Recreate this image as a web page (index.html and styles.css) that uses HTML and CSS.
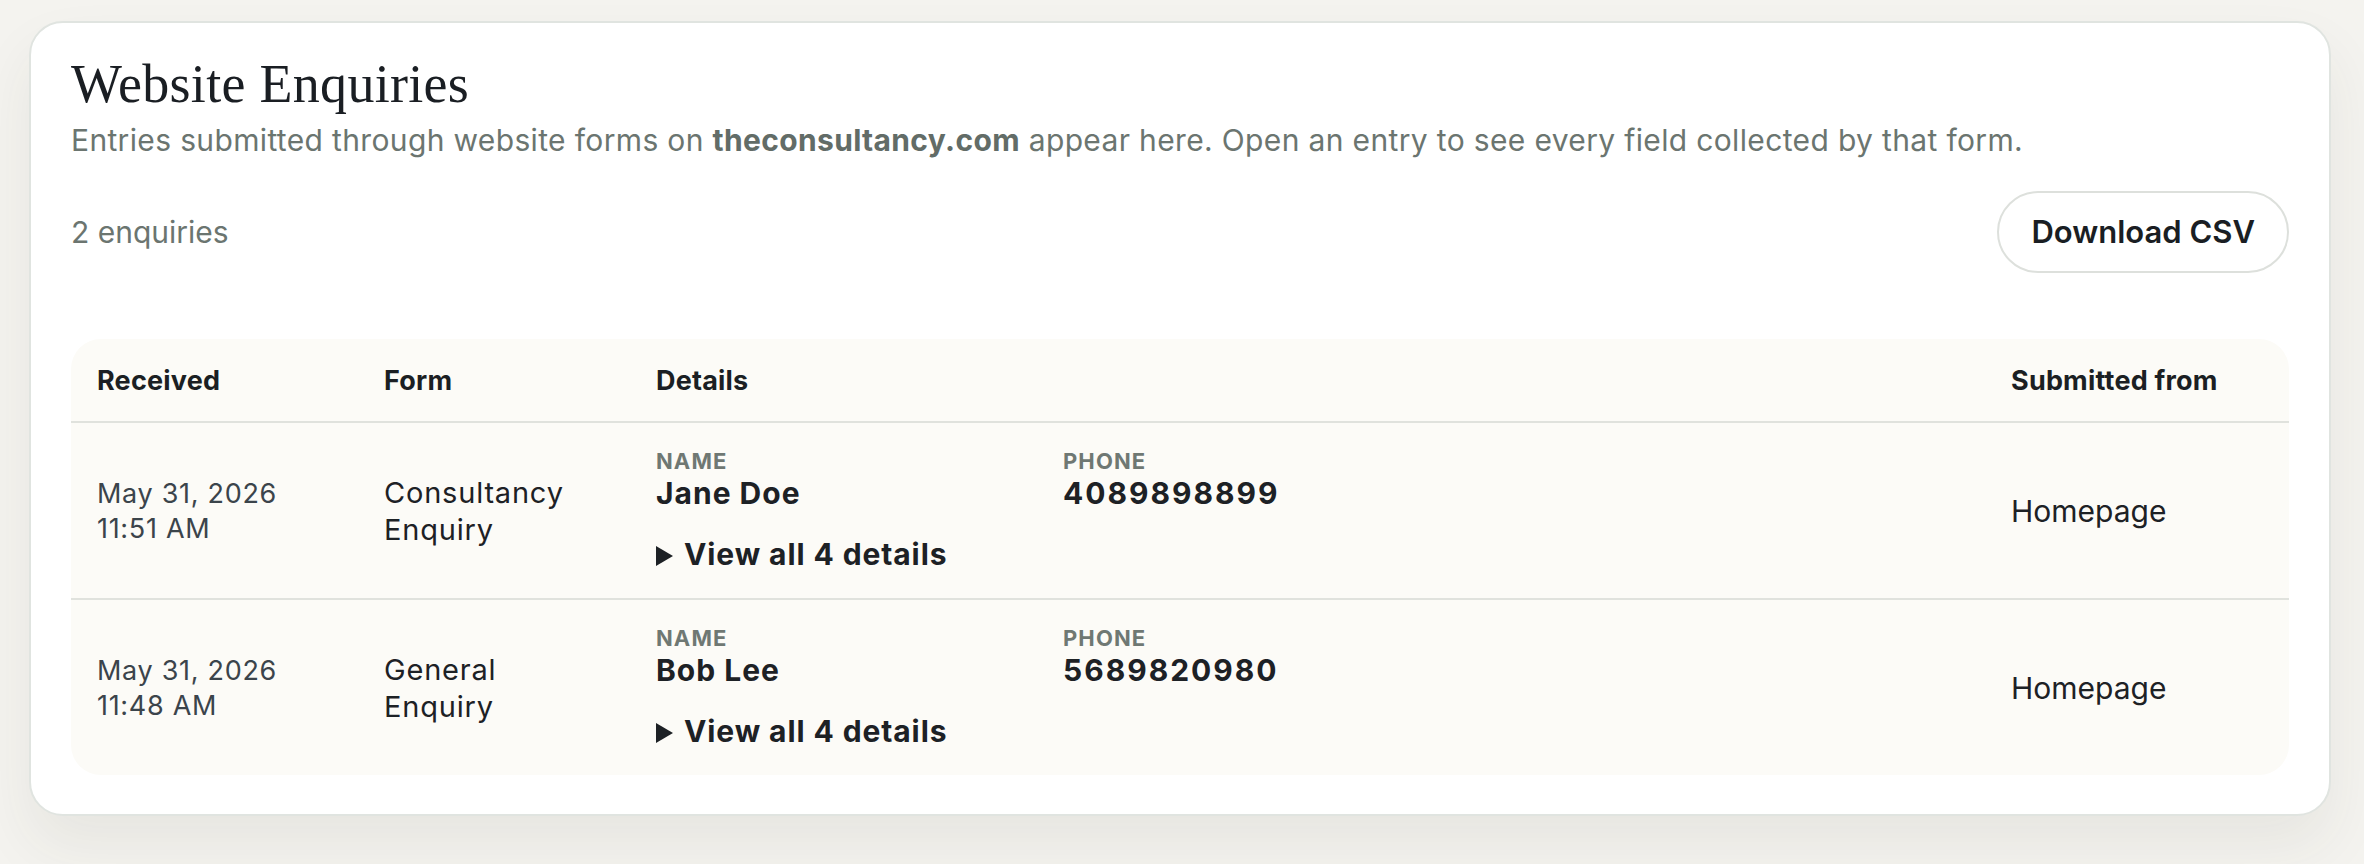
FILE: index.html
```html
<!DOCTYPE html>
<html lang="en">
<head>
    <meta charset="UTF-8">
    <meta name="viewport" content="width=device-width, initial-scale=1.0">
    <title>Website Enquiries</title>
    <link rel="stylesheet" href="styles.css">
</head>
<body>
    <div class="page">
        <section class="card">
            <h1 class="title">Website Enquiries</h1>
            <p class="intro">Entries submitted through website forms on <strong>theconsultancy.com</strong> appear here. Open an entry to see every field collected by that form.</p>

            <div class="toolbar">
                <span class="count">2 enquiries</span>
                <button class="csv-button" type="button">Download CSV</button>
            </div>

            <div class="table-wrap">
                <table class="enquiries">
                    <colgroup>
                        <col class="col-received">
                        <col class="col-form">
                        <col>
                        <col class="col-source">
                    </colgroup>
                    <thead>
                        <tr>
                            <th>Received</th>
                            <th>Form</th>
                            <th>Details</th>
                            <th>Submitted from</th>
                        </tr>
                    </thead>
                    <tbody>
                        <tr>
                            <td class="received">
                                <span>May 31, 2026</span>
                                <span>11:51 AM</span>
                            </td>
                            <td class="form-name">Consultancy Enquiry</td>
                            <td>
                                <div class="fields">
                                    <div class="field">
                                        <div class="field-label">Name</div>
                                        <div class="field-value">Jane Doe</div>
                                    </div>
                                    <div class="field">
                                        <div class="field-label">Phone</div>
                                        <div class="field-value">4089898899</div>
                                    </div>
                                </div>
                                <details class="more">
                                    <summary>View all 4 details</summary>
                                </details>
                            </td>
                            <td class="source">Homepage</td>
                        </tr>
                        <tr>
                            <td class="received">
                                <span>May 31, 2026</span>
                                <span>11:48 AM</span>
                            </td>
                            <td class="form-name">General Enquiry</td>
                            <td>
                                <div class="fields">
                                    <div class="field">
                                        <div class="field-label">Name</div>
                                        <div class="field-value">Bob Lee</div>
                                    </div>
                                    <div class="field">
                                        <div class="field-label">Phone</div>
                                        <div class="field-value">5689820980</div>
                                    </div>
                                </div>
                                <details class="more">
                                    <summary>View all 4 details</summary>
                                </details>
                            </td>
                            <td class="source">Homepage</td>
                        </tr>
                    </tbody>
                </table>
            </div>
        </section>
    </div>
</body>
</html>
```

FILE: styles.css
```css
body {
    margin: 0;
    background-color: #f4f3ef;
    font-family: Inter, "Noto Sans", sans-serif;
    color: #1c2024;
}
.page {
    padding: 21px 33px 48px 29px;
}
.card {
    background-color: #fff;
    border: 2px solid #e0e4e0;
    border-radius: 34px;
    padding: 31px 40px 39px;
    box-shadow: 0 30px 60px rgba(60, 60, 40, 0.07);
}
.title {
    margin: 0;
    font-family: "Liberation Serif", serif;
    font-weight: 400;
    font-size: 54px;
    line-height: 60px;
    letter-spacing: 0.3px;
    color: #1a1e23;
}
.intro {
    margin: 6px 0 0;
    font-size: 30px;
    line-height: 40px;
    letter-spacing: 0.35px;
    color: #6b7570;
}
.intro strong {
    font-weight: 700;
    color: #626c67;
}
.toolbar {
    margin-top: 31px;
    display: flex;
    align-items: center;
    justify-content: space-between;
}
.count {
    font-size: 30px;
    color: #6b7570;
}
.csv-button {
    font-family: inherit;
    font-size: 31px;
    font-weight: 600;
    line-height: 36px;
    padding: 21px 32px;
    border: 2px solid #dde0dc;
    border-radius: 999px;
    background-color: #fff;
    color: #1a1e23;
    cursor: pointer;
}
.csv-button:hover {
    background-color: #f7f7f3;
}

/* таблица заявок */
.table-wrap {
    margin-top: 66px;
    background-color: #fcfbf7;
    border-radius: 30px;
    overflow: hidden;
}
.enquiries {
    width: 100%;
    border-collapse: collapse;
    table-layout: fixed;
}
.col-received {
    width: 287px;
}
.col-form {
    width: 272px;
}
.col-source {
    width: 304px;
}
.enquiries th {
    text-align: left;
    font-size: 27px;
    font-weight: 700;
    line-height: 35px;
    letter-spacing: 0.2px;
    padding: 24px 26px 23px;
    border-bottom: 2px solid #e0e2dd;
    color: #1b1f23;
}
.enquiries td {
    height: 175px;
    padding: 0 26px;
    vertical-align: middle;
}
.enquiries tbody tr:not(:last-child) td {
    border-bottom: 2px solid #e0e2dd;
}
.received {
    font-size: 27px;
    line-height: 35px;
    letter-spacing: 0.7px;
    color: #3b444b;
}
.received span {
    display: block;
}
.enquiries td.form-name {
    padding-right: 40px;
    font-size: 29px;
    line-height: 37px;
    letter-spacing: 0.8px;
    color: #1d2125;
}
.fields {
    display: grid;
    grid-template-columns: 407px auto;
}
.field-label {
    font-size: 22px;
    font-weight: 700;
    line-height: 26px;
    letter-spacing: 0.05em;
    text-transform: uppercase;
    color: #6f7873;
}
.field-value {
    font-size: 30px;
    font-weight: 700;
    line-height: 38px;
    letter-spacing: 1px;
    color: #1d2125;
}
.field + .field .field-value {
    letter-spacing: 2px;
}
.more {
    margin-top: 24px;
}
.more summary {
    display: flex;
    align-items: center;
    gap: 11px;
    list-style: none;
    font-size: 30px;
    font-weight: 700;
    line-height: 37px;
    letter-spacing: 0.9px;
    color: #1d2125;
    cursor: pointer;
}
.more summary::-webkit-details-marker {
    display: none;
}
.more summary::before {
    content: "";
    width: 0;
    height: 0;
    border-top: 10px solid transparent;
    border-bottom: 10px solid transparent;
    border-left: 17px solid #1d2125;
    margin-top: 3px;
}
.source {
    font-size: 30px;
    color: #1d2125;
}
```
